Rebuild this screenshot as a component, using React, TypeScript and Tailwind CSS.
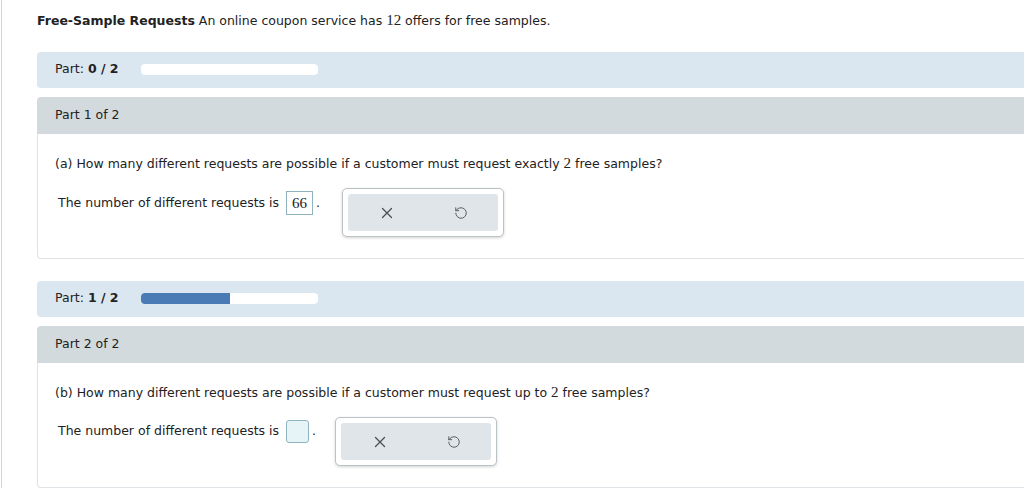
import React from "react";
import { RotateCcw } from "lucide-react";

const font = { fontFamily: '"DejaVu Sans", Verdana, sans-serif' };
const serif = { fontFamily: '"Liberation Serif", "Times New Roman", serif', fontSize: "15px" };

function ClearIcon() {
  return (
    <svg width="12" height="12" viewBox="0 0 12 12" fill="none" stroke="#4a4f54" strokeWidth="1.3" strokeLinecap="round">
      <path d="M1.5 1.5 L10.5 10.5 M10.5 1.5 L1.5 10.5" />
    </svg>
  );
}

function ProgressHeader({ done, total }: { done: number; total: number }) {
  const pct = (done / total) * 100;
  return (
    <div className="flex h-[36px] w-[1000px] items-center rounded-l-[4px] bg-[#dae6f0] pl-[18px] text-[12.5px] text-[#222]">
      <span className="w-[86px]">
        Part: <b>{done} / {total}</b>
      </span>
      <div className="h-[11px] w-[177px] overflow-hidden rounded-[4px] bg-white">
        <div className="h-full bg-[#4a7bb5]" style={{ width: `${pct}%` }} />
      </div>
    </div>
  );
}

function AnswerTools() {
  return (
    <div className="rounded-[5px] border border-[#bcc3c7] bg-white p-[5px] shadow-[0_1px_3px_rgba(0,0,0,0.18)]">
      <div className="flex h-[37px] w-[150px] items-center rounded-[3px] bg-[#dfe5e8]">
        <div className="flex w-[75px] justify-center pl-[2px]">
          <ClearIcon />
        </div>
        <div className="flex w-[75px] justify-center">
          <RotateCcw size={14} strokeWidth={1.5} color="#4a4f54" />
        </div>
      </div>
    </div>
  );
}

function PartCard({
  label,
  question,
  answer,
}: {
  label: string;
  question: React.ReactNode;
  answer?: string;
}) {
  return (
    <div className="w-[1000px]">
      <div className="flex h-[37px] items-center rounded-tl-[4px] bg-[#d3dadd] pl-[18px] text-[12.5px] text-[#222]">
        {label}
      </div>
      <div className="h-[125px] rounded-bl-[4px] border-b border-l border-[#dde3e6] pl-[17px] pt-[18px] text-[12.5px] text-[#222]">
        <p>{question}</p>
        <div className="mt-[15px] flex items-start">
          <div className="flex items-center pl-[3px] pt-[2px]">
            <span>The number of different requests is</span>
            {answer ? (
              <span
                className="ml-[7px] flex h-[24px] w-[27px] items-center justify-center border border-[#8fb4c0] text-[15px] text-[#222]"
                style={{ fontFamily: '"Liberation Serif", "Times New Roman", serif' }}
              >
                {answer}
              </span>
            ) : (
              <span className="ml-[7px] h-[23px] w-[23px] rounded-[3px] border border-[#8fb4c0] bg-[#e6f4f8]" />
            )}
            <span className="ml-[3px]">.</span>
          </div>
          <div className={answer ? "ml-[22px] mt-[-1px]" : "ml-[19px] mt-[-1px]"}>
            <AnswerTools />
          </div>
        </div>
      </div>
    </div>
  );
}

export default function App() {
  return (
    <div className="h-[488px] w-[1024px] overflow-hidden bg-white" style={font}>
      <div className="ml-[1px] h-full border-l border-[#c9d7d7] pl-[35px] pt-[9px]">
        <p className="text-[12.5px] text-[#222]">
          <b>Free-Sample Requests</b> An online coupon service has <span style={serif}>12</span> offers for free samples.
        </p>
        <div className="mt-[20px]">
          <ProgressHeader done={0} total={2} />
        </div>
        <div className="mt-[9px]">
          <PartCard
            label="Part 1 of 2"
            question={
              <>
                (a) How many different requests are possible if a customer must request exactly <span style={serif}>2</span> free samples?
              </>
            }
            answer="66"
          />
        </div>
        <div className="mt-[22px]">
          <ProgressHeader done={1} total={2} />
        </div>
        <div className="mt-[9px]">
          <PartCard
            label="Part 2 of 2"
            question={
              <>
                (b) How many different requests are possible if a customer must request up to <span style={serif}>2</span> free samples?
              </>
            }
          />
        </div>
      </div>
    </div>
  );
}
